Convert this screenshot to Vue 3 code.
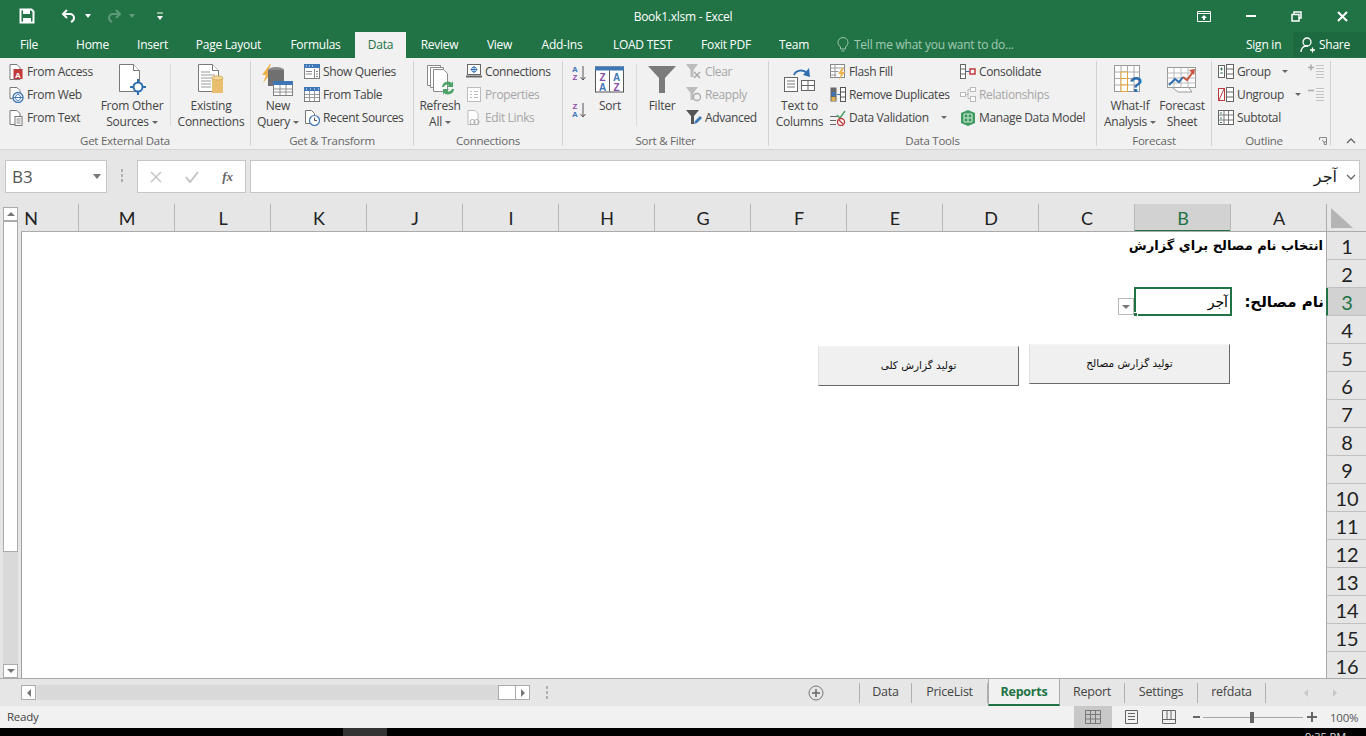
<script setup>
const tabs = [
  { t: 'File', w: 61 }, { t: 'Home', w: 63 }, { t: 'Insert', w: 57 }, { t: 'Page Layout', w: 95 },
  { t: 'Formulas', w: 79 }, { t: 'Data', w: 51, active: true }, { t: 'Review', w: 67 }, { t: 'View', w: 53 },
  { t: 'Add-Ins', w: 72 }, { t: 'LOAD TEST', w: 89 }, { t: 'Foxit PDF', w: 78 }, { t: 'Team', w: 58 }
]
const cols = ['N', 'M', 'L', 'K', 'J', 'I', 'H', 'G', 'F', 'E', 'D', 'C', 'B', 'A']
const rows = Array.from({ length: 16 }, (_, i) => i + 1)
const sheets = [
  { t: 'Data', w: 52 }, { t: 'PriceList', w: 76 }, { t: 'Reports', w: 72, active: true },
  { t: 'Report', w: 65 }, { t: 'Settings', w: 73 }, { t: 'refdata', w: 68 }
]
</script>

<template>
  <div class="app">
    <header class="title">
      <div class="qat">
        <svg class="q-save" width="16" height="16" viewBox="0 0 16 16"><path d="M1.500 1.500h11l2 2v11h-13z" fill="none" stroke="#fff" stroke-width="2"/><rect x="4" y="2" width="7" height="4" fill="#fff"/><rect x="4" y="10" width="8" height="4" fill="#fff"/></svg>
        <svg class="q-undo" width="16" height="14" viewBox="0 0 16 14"><path d="M6 1 2 5l4 4M2 5h7a4 4 0 0 1 4 4c0 2-1 3-3 4" fill="none" stroke="#fff" stroke-width="2"/></svg>
        <span class="caret q-c1"></span>
        <svg class="q-redo" width="16" height="14" viewBox="0 0 16 14"><path d="M10 1l4 4-4 4M14 5H7a4 4 0 0 0-4 4c0 2 1 3 3 4" fill="none" stroke="#5f9a7b" stroke-width="2"/></svg>
        <span class="caret dim q-c2"></span>
        <svg class="q-more" width="8" height="9" viewBox="0 0 8 9"><path d="M1 1h6" stroke="#fff"/><path d="M1 4h6L4 8z" fill="#fff"/></svg>
      </div>
      <div class="doc">Book1.xlsm - Excel</div>
      <div class="win">
        <svg width="14" height="11" viewBox="0 0 14 11"><path d="M.5.5h13v10H.5zM.5 2.500h13" fill="none" stroke="#fff"/><path d="M7 4l3 3H8v2H6V7H4z" fill="#fff"/></svg>
        <svg width="10" height="2" viewBox="0 0 10 2"><rect width="10" height="2" fill="#fff"/></svg>
        <svg width="11" height="11" viewBox="0 0 11 11"><path d="M3 3V1h7v6H8M1 3.500h7v6.500H1z" fill="none" stroke="#fff" stroke-width="1.500"/></svg>
        <svg width="11" height="11" viewBox="0 0 11 11"><path d="M1 1l9 9M10 1l-9 9" stroke="#fff" stroke-width="2"/></svg>
      </div>
    </header>

    <nav class="tabs">
      <div v-for="tab in tabs" :key="tab.t" class="tab" :class="{ active: tab.active }" :style="{ width: tab.w + 'px' }">{{ tab.t }}</div>
      <div class="tell">
        <svg width="12" height="15" viewBox="0 0 12 15"><path d="M3.500 10C2 8.500 1 7.500 1 5.500a5 5 0 0 1 10 0c0 2-1 3-2.500 4.500v2h-5zM4.500 14h3" fill="none" stroke="#9cc4ad"/></svg>
        <span>Tell me what you want to do...</span>
      </div>
      <div class="sign">Sign in</div>
      <div class="share">
        <svg width="16" height="16" viewBox="0 0 16 16"><circle cx="7" cy="5" r="4" fill="none" stroke="#fff" stroke-width="1.300"/><path d="M1 15c0-3 2-6 5-6h2M10 13h5M12.500 10.500v5" fill="none" stroke="#fff" stroke-width="1.300"/></svg>
        <span>Share</span>
      </div>
    </nav>

    <section class="ribbon">
      <!-- Get External Data -->
      <div class="group g1">
        <div class="body">
          <div class="small-col c-ext">
            <div class="si"><svg width="15" height="16" viewBox="0 0 15 16"><path d="M1.500.5h7l3 3v12h-10z" fill="#fff" stroke="#777"/><rect x="5" y="5" width="9" height="10" fill="#c0393b"/><text x="9.500" y="13.500" class="ic-t wh">A</text></svg>From Access</div>
            <div class="si"><svg width="15" height="16" viewBox="0 0 15 16"><path d="M1.500.5h7l3 3v8h-10z" fill="#fff" stroke="#777"/><circle cx="9.500" cy="10.500" r="5" fill="#fff" stroke="#3f76b5" stroke-width="1.300"/><path d="M4.500 10.500h10M7 10.500c0-4 5-4 5 0s-5 4-5 0" fill="none" stroke="#3f76b5"/></svg>From Web</div>
            <div class="si"><svg width="15" height="16" viewBox="0 0 15 16"><path d="M1.500.5h7l3 3v11h-10z" fill="#fff" stroke="#777"/><rect x="6.500" y="6.500" width="7" height="9" fill="#fff" stroke="#777"/><path d="M8 9h4M8 11h4M8 13h4" stroke="#888"/></svg>From Text</div>
          </div>
          <div class="large w-other">
            <svg width="30" height="32" viewBox="0 0 30 32"><path d="M2.500.5h14l6 6v21h-20z" fill="#fff" stroke="#7a7a7a"/><path d="M16.500.5v6h6" fill="#fff" stroke="#7a7a7a"/><circle cx="21" cy="23" r="4.500" fill="#fff" stroke="#2f6fb0" stroke-width="2"/><path d="M13 23h4M25 23h4M21 15v4M21 27v4" stroke="#2f6fb0" stroke-width="2"/></svg>
            <div class="lt">From Other<br>Sources<i class="mini"></i></div>
          </div>
          <div class="lsep s-a"></div>
          <div class="large w-exist">
            <svg width="30" height="32" viewBox="0 0 30 32"><path d="M2.500.5h14l6 6v21h-20z" fill="#fff" stroke="#7a7a7a"/><path d="M16.500.5v6h6" fill="#fff" stroke="#7a7a7a"/><path d="M5 8h9M5 11h14M5 14h14M5 17h10M5 20h10M5 23h10" stroke="#999"/><rect x="16" y="14" width="11" height="15" fill="#e9bf6f"/><ellipse cx="21.500" cy="14" rx="5.500" ry="2" fill="#f3d9a0" stroke="#d9a94f"/></svg>
            <div class="lt">Existing<br>Connections</div>
          </div>
        </div>
        <div class="label">Get External Data</div>
      </div>

      <!-- Get & Transform -->
      <div class="group g2">
        <div class="body">
          <div class="large w-44">
            <svg width="36" height="32" viewBox="0 0 36 32"><path d="M10 0 2 11h4l-3 8 10-12H8l3-7z" fill="#efb24c"/><ellipse cx="16" cy="6" rx="8" ry="3" fill="#8a8a8a"/><rect x="8" y="6" width="16" height="16" fill="#707070"/><rect x="13.500" y="17.500" width="19" height="14" fill="#fff" stroke="#7f7f7f"/><rect x="13" y="17" width="20" height="4" fill="#3f76b5"/><path d="M13.500 25h19M13.500 28h19M20 21v10M26 21v10" stroke="#8f8f8f"/></svg>
            <div class="lt">New<br>Query<i class="mini"></i></div>
          </div>
          <div class="small-col">
            <div class="si"><svg width="16" height="15" viewBox="0 0 16 15"><rect x=".5" y=".5" width="15" height="14" fill="#fff" stroke="#7f7f7f"/><rect width="16" height="4" fill="#3f76b5"/><path d="M2 2h1M5 2h1M8 2h1" stroke="#fff"/><path d="M10.500 5v9M12 7.500h2M12 10h2M12 12.500h2M2 7.500h6M2 10h6" stroke="#888"/></svg>Show Queries</div>
            <div class="si"><svg width="16" height="15" viewBox="0 0 16 15"><rect x=".5" y=".5" width="15" height="14" fill="#fff" stroke="#7f7f7f"/><rect width="16" height="4" fill="#3f76b5"/><path d="M2 2h1M6 2h1M10 2h1M14 2h1" stroke="#fff"/><path d="M1 7.500h14M1 10.500h14M5.500 4v10M10.500 4v10" stroke="#999"/></svg>From Table</div>
            <div class="si"><svg width="16" height="16" viewBox="0 0 16 16"><path d="M1.500.5h6l3 3v10h-9z" fill="#fff" stroke="#777"/><circle cx="10.500" cy="10.500" r="5" fill="#fff" stroke="#3f76b5" stroke-width="1.200"/><path d="M10.500 7.500v3h2.500" fill="none" stroke="#555"/></svg>Recent Sources</div>
          </div>
        </div>
        <div class="label">Get &amp; Transform</div>
      </div>

      <!-- Connections -->
      <div class="group g3">
        <div class="body">
          <div class="large w-44b">
            <svg width="32" height="32" viewBox="0 0 32 32"><path d="M3.500 1.500h13v20h-13z" fill="#fff" stroke="#8a8a8a"/><path d="M6.500 3.500h13v20h-13z" fill="#fff" stroke="#8a8a8a"/><path d="M9.500 5.500h10l4 4v18h-14z" fill="#fff" stroke="#8a8a8a"/><path d="M18 23a6 6 0 0 1 10-4l1-2v6h-6l2-2a3.500 3.500 0 0 0-5 2zM30 25a6 6 0 0 1-10 4l-1 2v-6h6l-2 2a3.500 3.500 0 0 0 5-2z" fill="#4da266"/></svg>
            <div class="lt">Refresh<br>All<i class="mini"></i></div>
          </div>
          <div class="small-col">
            <div class="si"><svg width="16" height="15" viewBox="0 0 16 15"><rect x="1.500" y=".5" width="13" height="10" fill="#fff" stroke="#666"/><path d="M0 12.500h16" stroke="#666" stroke-width="2"/><circle cx="8" cy="5.500" r="2.500" fill="#fff" stroke="#3f76b5"/><path d="M8 2v7M4.500 5.500h7" stroke="#3f76b5"/></svg>Connections</div>
            <div class="si dis"><svg width="16" height="15" viewBox="0 0 16 15"><rect x="1.500" y=".5" width="13" height="14" fill="#fff" stroke="#bbb"/><path d="M4 4.500h2M8 4.500h4M4 7.500h2M8 7.500h4M4 10.500h2M8 10.500h4" stroke="#bbb"/></svg>Properties</div>
            <div class="si dis"><svg width="15" height="16" viewBox="0 0 15 16"><path d="M1.500.5h7l3 3v11h-10z" fill="#fff" stroke="#bbb"/><circle cx="6" cy="12" r="2.500" fill="none" stroke="#aaa"/><circle cx="10" cy="12" r="2.500" fill="none" stroke="#aaa"/></svg>Edit Links</div>
          </div>
        </div>
        <div class="label">Connections</div>
      </div>

      <!-- Sort & Filter -->
      <div class="group g4">
        <div class="body">
          <div class="sort-col">
            <svg width="16" height="18" viewBox="0 0 16 18"><text x="4" y="8" class="ic-t blu">A</text><text x="4" y="16" class="ic-t pur">Z</text><path d="M12 2v14M9.500 13l2.500 3 2.500-3" fill="none" stroke="#555"/></svg>
            <svg width="16" height="18" viewBox="0 0 16 18"><text x="4" y="8" class="ic-t pur">Z</text><text x="4" y="16" class="ic-t blu">A</text><path d="M12 2v14M9.500 13l2.500 3 2.500-3" fill="none" stroke="#555"/></svg>
          </div>
          <div class="large w-sort">
            <svg width="30" height="27" viewBox="0 0 30 27"><rect x=".5" y=".5" width="28" height="25" fill="#fff" stroke="#555"/><rect width="29" height="4" fill="#3f76b5"/><path d="M14.500 4v21" stroke="#555"/><text x="7.500" y="14" class="ic-b pur">Z</text><text x="7.500" y="24" class="ic-b blu">A</text><text x="21.500" y="14" class="ic-b blu">A</text><text x="21.500" y="24" class="ic-b pur">Z</text></svg>
            <div class="lt">Sort</div>
          </div>
          <div class="lsep s-b"></div>
          <div class="large w-filter">
            <svg width="28" height="28" viewBox="0 0 28 28"><path d="M0 0h28L17 12v15h-6V12z" fill="#7b7b7b"/></svg>
            <div class="lt">Filter</div>
          </div>
          <div class="small-col">
            <div class="si dis"><svg width="16" height="15" viewBox="0 0 16 15"><path d="M0 0h12L7.500 6v7h-3V6z" fill="#bdbdbd"/><path d="M8 8l6 6M14 8l-6 6" stroke="#aaa" stroke-width="1.500"/></svg>Clear</div>
            <div class="si dis"><svg width="16" height="15" viewBox="0 0 16 15"><path d="M0 0h12L7.500 6v7h-3V6z" fill="#bdbdbd"/><circle cx="11" cy="10" r="3.500" fill="none" stroke="#aaa" stroke-width="1.300"/></svg>Reapply</div>
            <div class="si"><svg width="16" height="15" viewBox="0 0 16 15"><path d="M0 0h13L8 6v8H5V6z" fill="#555"/><path d="M8 14l1-3 5-5 2 2-5 5z" fill="#3f76b5"/></svg>Advanced</div>
          </div>
        </div>
        <div class="label">Sort &amp; Filter</div>
      </div>

      <!-- Data Tools -->
      <div class="group g5">
        <div class="body">
          <div class="large w-text">
            <svg width="32" height="26" viewBox="0 0 32 26"><rect x=".5" y="10.500" width="13" height="14" fill="#fff" stroke="#666"/><path d="M3 14h8M3 17h8M3 20h8" stroke="#777"/><rect x="17.500" y="13.500" width="13" height="10" fill="#fff" stroke="#666"/><path d="M24 13.500v10M17.500 18.500h13" stroke="#666"/><path d="M10 8c2-5 9-6 13-2" fill="none" stroke="#2f6fb0" stroke-width="2"/><path d="M25 1l1 9-7-2z" fill="#2f6fb0"/></svg>
            <div class="lt">Text to<br>Columns</div>
          </div>
          <div class="small-col c-dt">
            <div class="si"><svg width="16" height="16" viewBox="0 0 16 16"><rect x=".5" y=".5" width="14" height="13" fill="#fff" stroke="#888"/><path d="M.5 4h14M.5 7.500h8M.5 11h6M5 .5v13" stroke="#999"/><path d="M12 4 8 10h3l-2 6 6-8h-3l2-4z" fill="#efb24c"/></svg>Flash Fill</div>
            <div class="si"><svg width="16" height="15" viewBox="0 0 16 15"><rect x=".5" y=".5" width="6" height="14" fill="#666"/><rect x="1.500" y="5" width="4" height="4" fill="#3f76b5"/><rect x="1.500" y="10" width="4" height="4" fill="#e0b050"/><path d="M7 7.500h3" stroke="#2f6fb0"/><rect x="10.500" y=".5" width="5" height="14" fill="#fff" stroke="#555"/><path d="M10.500 5h5M10.500 10h5" stroke="#555"/></svg>Remove Duplicates</div>
            <div class="si"><svg width="16" height="16" viewBox="0 0 16 16"><path d="M0 6.500h9M0 10.500h6M0 14.500h6" stroke="#666"/><path d="M7 5l3 3 5-7" fill="none" stroke="#4da266" stroke-width="1.500"/><circle cx="11" cy="12" r="3.500" fill="#fff" stroke="#c0393b" stroke-width="1.300"/><path d="M8.500 9.500l5 5" stroke="#c0393b" stroke-width="1.300"/></svg>Data Validation<i class="mini wide"></i></div>
          </div>
          <div class="small-col">
            <div class="si"><svg width="16" height="15" viewBox="0 0 16 15"><rect x=".5" y=".5" width="5" height="14" fill="#fff" stroke="#666"/><path d="M.5 5h5M.5 10h5" stroke="#666"/><path d="M6 7.500h3" stroke="#2f6fb0"/><rect x="10" y="5" width="5" height="5" fill="#fff" stroke="#c0393b" stroke-width="1.500"/></svg>Consolidate</div>
            <div class="si dis"><svg width="16" height="15" viewBox="0 0 16 15"><rect x=".5" y="5.500" width="5" height="4" fill="#fff" stroke="#bbb"/><rect x="10.500" y=".5" width="5" height="4" fill="#fff" stroke="#bbb"/><rect x="10.500" y="9.500" width="5" height="5" fill="#fff" stroke="#bbb"/><path d="M5.500 7.500h3M8 2.500v9M8 2.500h2M8 11.500h2" stroke="#bbb"/></svg>Relationships</div>
            <div class="si"><svg width="16" height="16" viewBox="0 0 16 16"><path d="M8 0l7 3v10l-7 3-7-3V3z" fill="#3d9a5f"/><path d="M4 4h8v8H4zM8 4v8M4 8h8" fill="none" stroke="#cfe8d6"/></svg>Manage Data Model</div>
          </div>
        </div>
        <div class="label">Data Tools</div>
      </div>

      <!-- Forecast -->
      <div class="group g6">
        <div class="body">
          <div class="large w-what">
            <svg class="whatif" width="32" height="30" viewBox="0 0 32 30"><rect x=".5" y=".5" width="25" height="26" fill="#fff" stroke="#999"/><path d="M.5 7h25M.5 13.500h25M.5 20h25M7 .5v26M13.500 .5v26M20 .5v26" stroke="#aaa"/><rect x="7" y="7" width="6.500" height="6.500" fill="#fff" stroke="#e3a63f"/><rect x="7" y="13.500" width="6.500" height="6.500" fill="#fff" stroke="#e3a63f"/><rect x="7" y="20" width="6.500" height="6.500" fill="#fff" stroke="#e3a63f"/><text x="22" y="27" class="ic-q">?</text></svg>
            <div class="lt">What-If<br>Analysis<i class="mini"></i></div>
          </div>
          <div class="large w-fore">
            <svg width="30" height="26" viewBox="0 0 30 26"><rect x=".5" y=".5" width="28" height="20" fill="#fff" stroke="#999"/><path d="M.5 6h28M.5 11h28M.5 16h28M7 .5v20M14 .5v20M21 .5v20" stroke="#bbb"/><path d="M6 21l5 4h14l-3-4" fill="#fff" stroke="#999"/><path d="M2 18l6-6 4 3 4-5" fill="none" stroke="#2f6fb0" stroke-width="2"/><path d="M16 10l4 3 6-8" fill="none" stroke="#c8553d" stroke-width="2"/><path d="M22 3l6-1-1 6z" fill="#c8553d"/></svg>
            <div class="lt">Forecast<br>Sheet</div>
          </div>
        </div>
        <div class="label">Forecast</div>
      </div>

      <!-- Outline -->
      <div class="group g7">
        <div class="body">
          <div class="small-col c-out">
            <div class="si"><svg width="16" height="15" viewBox="0 0 16 15"><rect x=".5" y="1.500" width="6" height="12" fill="#fff" stroke="#666"/><path d="M2 5h3M2 9h3M3.500 3.500v3" stroke="#3b7d55"/><rect x="8.500" y=".5" width="7" height="14" fill="#fff" stroke="#666"/><path d="M8.500 5h7M8.500 10h7" stroke="#666"/></svg>Group<i class="mini far"></i></div>
            <div class="si"><svg width="16" height="15" viewBox="0 0 16 15"><rect x=".5" y="1.500" width="6" height="12" fill="#fff" stroke="#c0393b"/><path d="M1 13L6 2" stroke="#c0393b"/><rect x="8.500" y=".5" width="7" height="14" fill="#fff" stroke="#666"/><path d="M8.500 5h7M8.500 10h7" stroke="#666"/></svg>Ungroup<i class="mini far"></i></div>
            <div class="si"><svg width="16" height="15" viewBox="0 0 16 15"><rect x=".5" y=".5" width="15" height="14" fill="#fff" stroke="#666"/><path d="M6 .5v14M10.500 .5v14M.5 5h15M.5 10h15" stroke="#777"/><path d="M2 3h2M2 8h2M2 12.500h2" stroke="#3b7d55"/></svg>Subtotal</div>
          </div>
          <div class="out-col">
            <svg width="16" height="15" viewBox="0 0 16 15"><path d="M0 3.500h6M3 .5v6" stroke="#aaa" stroke-width="1.500"/><path d="M8 1.500h8M8 4.500h8M8 7.500h8M8 10.500h8M8 13.500h8" stroke="#c4c4c4"/></svg>
            <svg width="16" height="15" viewBox="0 0 16 15"><path d="M0 3.500h6" stroke="#aaa" stroke-width="1.500"/><path d="M8 1.500h8M8 4.500h8M8 7.500h8M8 10.500h8M8 13.500h8" stroke="#c4c4c4"/></svg>
          </div>
        </div>
        <div class="label l-out">Outline
          <svg class="launch" width="8" height="8" viewBox="0 0 8 8"><path d="M.5 3V.5H7.500V7.500H5M3 3l3 3M6 4v2H4" fill="none" stroke="#888"/></svg>
        </div>
      </div>
      <svg class="collapse" width="10" height="6" viewBox="0 0 10 6"><path d="M1 5l4-4 4 4" fill="none" stroke="#666" stroke-width="1.300"/></svg>
    </section>

    <section class="fbar">
      <div class="namebox"><span>B3</span><i class="fcaret"></i></div>
      <div class="dots"><i></i><i></i><i></i></div>
      <div class="fxbox">
        <svg width="12" height="12" viewBox="0 0 12 12"><path d="M1 1l10 10M11 1L1 11" stroke="#c4c4c4" stroke-width="1.500"/></svg>
        <svg width="14" height="12" viewBox="0 0 14 12"><path d="M1 6l4 5 8-10" fill="none" stroke="#c4c4c4" stroke-width="2"/></svg>
        <span class="fx">fx</span>
      </div>
      <div class="finput"><span dir="rtl">آجر</span><svg width="10" height="6" viewBox="0 0 10 6"><path d="M1 1l4 4 4-4" fill="none" stroke="#666" stroke-width="1.300"/></svg></div>
    </section>

    <section class="work">
      <aside class="vscroll">
        <div class="sbtn"><i class="tri up"></i></div>
        <div class="vtrack"><div class="vthumb"></div></div>
        <div class="sbtn"><i class="tri down"></i></div>
      </aside>
      <div class="sheet">
        <div class="hrow">
          <div class="colheads">
            <div v-for="c in cols" :key="c" class="colhead" :class="{ sel: c === 'B' }">{{ c }}</div>
          </div>
          <div class="corner"><svg width="22" height="20" viewBox="0 0 22 20"><path d="M0 0l22 20H0z" fill="#b4b4b4"/></svg></div>
        </div>
        <div class="rowsarea">
          <div v-for="r in rows" :key="r" class="row">
            <div class="cells">
              <template v-if="r === 1"><div class="a1" dir="rtl">انتخاب نام مصالح براي گزارش</div></template>
              <template v-if="r === 3">
                <div class="b3" dir="rtl">آجر<i class="handle"></i>
                  <div class="dd"><i class="tri down"></i></div>
                </div>
                <div class="a3" dir="rtl">نام مصالح:</div>
              </template>
            </div>
            <div class="rowhead" :class="{ sel: r === 3 }">{{ r }}</div>
          </div>
          <button class="xbtn xb1" dir="rtl">توليد گزارش مصالح</button>
          <button class="xbtn xb2" dir="rtl">توليد گزارش کلی</button>
        </div>
      </div>
    </section>

    <section class="strip">
      <div class="sbtn h b-l"><i class="tri left"></i></div>
      <div class="htrack"></div>
      <div class="hthumb"></div>
      <div class="sbtn h"><i class="tri right"></i></div>
      <div class="dots hd"><i></i><i></i><i></i></div>
      <svg class="plus" width="16" height="16" viewBox="0 0 16 16"><circle cx="8" cy="8" r="7" fill="none" stroke="#777"/><path d="M4 8h8M8 4v8" stroke="#666" stroke-width="1.500"/></svg>
      <div class="sheets">
        <div v-for="s in sheets" :key="s.t" class="stab" :class="{ active: s.active }" :style="{ width: s.w + 'px' }">{{ s.t }}</div>
      </div>
      <i class="tri left pale nav1"></i>
      <i class="tri right pale nav2"></i>
    </section>

    <footer class="status">
      <span class="ready">Ready</span>
      <div class="views">
        <div class="view on"><svg width="16" height="14" viewBox="0 0 16 14"><path d="M.5.500h15v13H.5zM.5 4.500h15M.5 9h15M5.500.500v13M10.500.500v13" fill="none" stroke="#777"/></svg></div>
        <div class="view"><svg width="13" height="14" viewBox="0 0 13 14"><path d="M.5.500h12v13H.5zM3 3.500h7M3 6.500h7M3 9.500h7" fill="none" stroke="#666"/></svg></div>
        <div class="view"><svg width="14" height="14" viewBox="0 0 14 14"><path d="M.5.500h13v13H.5zM.5 9.500h13M5 .5v9M9 .5v9" fill="none" stroke="#666"/></svg></div>
      </div>
      <div class="zoomer">
        <i class="zm"></i>
        <div class="zline"><i class="zthumb"></i></div>
        <svg width="10" height="10" viewBox="0 0 10 10"><path d="M0 5h10M5 0v10" stroke="#666" stroke-width="2"/></svg>
      </div>
      <span class="pct">100%</span>
    </footer>

    <div class="taskbar"><div class="tb-app"></div><span class="clock">9:35 PM</span></div>
  </div>
</template>

<style scoped>
.app { width: 1366px; height: 736px; overflow: hidden; display: flex; flex-direction: column; font: 12px "Open Sans", "Noto Sans", sans-serif; color: #444; background: #fff; letter-spacing: -0.25px; }
i { display: block; font-style: normal; }
svg { display: block; flex: none; }

.title { height: 32px; flex: none; background: #217346; display: flex; align-items: center; position: relative; color: #fff; }
.qat { display: flex; align-items: center; padding-left: 19px; }
.q-undo { margin-left: 26px; }
.q-c1 { margin-left: 8px; }
.q-redo { margin-left: 15px; }
.q-c2 { margin-left: 7px; }
.q-more { margin-left: 21px; }
.caret { width: 0; height: 0; border: 3px solid transparent; border-top: 4px solid #fff; border-bottom: 0; }
.caret.dim { border-top-color: #5f9a7b; }
.doc { position: absolute; left: 0; right: 0; text-align: center; font-size: 12px; }
.win { margin-left: auto; display: flex; align-items: center; gap: 0; padding-right: 18px; }
.win svg { margin-left: 35px; }

.tabs { height: 26px; flex: none; background: #217346; display: flex; color: #fff; }
.tab { text-align: center; line-height: 25px; height: 26px; box-sizing: border-box; }
.tab:first-child { padding-right: 3px; }
.tab.active { background: #f1f1f1; color: #217346; }
.tell { display: flex; align-items: center; gap: 5px; margin-left: 14px; color: #a3c9b3; width: 409px; height: 25px; }
.sign { line-height: 25px; width: 47px; }
.share { width: 73px; height: 25px; background: #1e6a40; display: flex; align-items: center; gap: 3px; padding-left: 7px; box-sizing: border-box; }

.ribbon { height: 92px; flex: none; background: #f1f1f1; border-bottom: 1px solid #d4d4d4; box-sizing: border-box; display: flex; position: relative; }
.group { position: relative; display: flex; flex-direction: column; box-sizing: border-box; border-right: 1px solid #d2d2d2; margin-top: 3px; margin-bottom: 3px; height: 85px; }
.g1 { width: 251px; }
.g2 { width: 163px; }
.g3 { width: 149px; }
.g4 { width: 206px; }
.g5 { width: 328px; }
.g6 { width: 115px; }
.g7 { width: 119px; }
.body { height: 71px; display: flex; flex: none; }
.label { text-align: center; font-size: 11.5px; color: #666; line-height: 14px; margin-top: 2px; position: relative; }
.l-out { padding-right: 14px; }
.launch { position: absolute; right: 3px; top: 3px; }
.small-col { display: flex; flex-direction: column; margin-top: -1px; }
.si { height: 23px; display: flex; align-items: center; gap: 3px; white-space: nowrap; letter-spacing: -0.37px; }
.si > svg { width: 16px; }
.si.dis { color: #a6a6a6; }
.c-ext { width: 94px; margin-left: 8px; }
.c-dt { width: 130px; margin-left: 1px; }
.c-out { width: 90px; margin-left: 6px; }
.large { display: flex; flex-direction: column; align-items: center; text-align: center; line-height: 16px; }
.large > svg { height: 32px; margin-top: 3px; margin-bottom: 2px; }
.whatif { overflow: visible; }
.lt { white-space: nowrap; }
.w-other { width: 60px; }
.w-exist { width: 68px; }
.w-44 { width: 44px; margin-left: 5px; margin-right: 4px; }
.w-44b { width: 44px; margin-left: 4px; margin-right: 4px; }
.w-sort { width: 40px; }
.w-filter { width: 40px; margin-right: 4px; }
.w-text { width: 59px; margin-left: 1px; }
.w-what { width: 56px; margin-left: 5px; }
.w-fore { width: 48px; }
.lsep { width: 1px; height: 62px; background: #dcdcdc; margin-top: 3px; flex: none; }
.s-a { margin-left: 8px; margin-right: 6px; }
.s-b { margin-left: 6px; margin-right: 5px; }
.sort-col { width: 19px; margin-left: 8px; display: flex; flex-direction: column; gap: 19px; padding-top: 3px; box-sizing: border-box; }
.out-col { display: flex; flex-direction: column; gap: 8px; padding-top: 3px; }
.mini { display: inline-block; width: 0; height: 0; margin-left: 3px; border: 3px solid transparent; border-top: 3px solid #666; border-bottom: 0; vertical-align: middle; }
.mini.wide { margin-left: 9px; }
.mini.far { margin-left: 8px; }
.collapse { position: absolute; left: 1346px; top: 80px; }
.ic-t { font: 700 8px "Liberation Sans", sans-serif; text-anchor: middle; letter-spacing: 0; }
.ic-b { font: 700 10px "Liberation Sans", sans-serif; text-anchor: middle; letter-spacing: 0; }
.ic-q { font: 700 22px "Liberation Sans", sans-serif; text-anchor: middle; fill: #2f6fb0; letter-spacing: 0; }
.wh { fill: #fff; }
.blu { fill: #3f76b5; }
.pur { fill: #8a4fa8; }

.fbar { height: 54px; flex: none; background: #e6e6e6; display: flex; align-items: flex-start; padding-top: 10px; box-sizing: border-box; }
.namebox, .fxbox, .finput { height: 33px; background: #fff; border: 1px solid #c6c6c6; box-sizing: border-box; display: flex; align-items: center; }
.namebox { width: 102px; margin-left: 5px; padding: 0 5px 0 6px; justify-content: space-between; font-size: 17px; color: #555; letter-spacing: 0; }
.fcaret { width: 0; height: 0; border: 4px solid transparent; border-top: 5px solid #777; border-bottom: 0; }
.dots { display: flex; flex-direction: column; gap: 2px; width: 2px; margin: 9px 14px 0 14px; }
.dots i { width: 2px; height: 3px; background: #b0b0b0; }
.fxbox { width: 109px; justify-content: space-between; padding: 0 12px 0 12px; }
.fx { font: italic 700 13px "Liberation Serif", serif; color: #666; letter-spacing: 0; }
.finput { width: 1110px; margin-left: 4px; justify-content: flex-end; gap: 9px; padding-right: 3px; font: 16px "DejaVu Sans", sans-serif; letter-spacing: 0; color: #222; }

.work { height: 474px; flex: none; display: flex; background: #e6e6e6; }
.vscroll { width: 21px; flex: none; padding: 3px 3px 0 3px; box-sizing: border-box; display: flex; flex-direction: column; }
.sbtn { width: 15px; height: 14px; background: #fff; border: 1px solid #ababab; box-sizing: border-box; display: flex; align-items: center; justify-content: center; flex: none; }
.vtrack { flex: 1; background: #d9d9d9; }
.vthumb { height: 331px; background: #fff; border: 1px solid #ababab; box-sizing: border-box; }
.tri { width: 0; height: 0; border: 4px solid transparent; }
.tri.up { border-bottom: 4px solid #777; border-top: 0; }
.tri.down { border-top: 4px solid #777; border-bottom: 0; }
.tri.left { border-right: 4px solid #777; border-left: 0; }
.tri.right { border-left: 4px solid #777; border-right: 0; }
.tri.pale.left { border-right-color: #c8c8c8; }
.tri.pale.right { border-left-color: #c8c8c8; }
.sheet { width: 1345px; display: flex; flex-direction: column; overflow: hidden; }
.hrow { height: 28px; flex: none; display: flex; }
.colheads { width: 1305px; display: flex; justify-content: flex-end; overflow: hidden; border-bottom: 1px solid #ababab; box-sizing: border-box; }
.colhead { width: 96px; flex: none; text-align: center; font: 18px/28px Lato, sans-serif; color: #222; border-left: 1px solid #b8b8b8; padding-left: 1px; box-sizing: border-box; letter-spacing: 0; }
.colhead.sel { background: #d2d2d2; border-bottom: 2px solid #217346; color: #217346; height: 28px; }
.corner { width: 40px; padding: 4px 0 0 4px; box-sizing: border-box; border-bottom: 1px solid #ababab; border-left: 1px solid #ababab; }
.rowsarea { flex: 1; position: relative; overflow: hidden; }
.row { height: 28px; display: flex; }
.cells { width: 1305px; height: 28px; flex: none; background: #fff; border-left: 1px solid #9f9f9f; box-sizing: border-box; position: relative; display: flex; justify-content: flex-end; }
.rowhead { width: 40px; box-sizing: border-box; text-align: center; font: 20px/28px Lato, sans-serif; color: #222; border-left: 1px solid #ababab; border-bottom: 1px solid #c0c0c0; padding-left: 1px; letter-spacing: 0; }
.rowhead.sel { background: #d2d2d2; color: #217346; border-left: 2px solid #217346; padding-left: 0; }
.a1 { position: absolute; right: 3px; top: 4px; font: 700 13px/20px "DejaVu Sans", sans-serif; color: #000; white-space: nowrap; letter-spacing: 0; }
.a3 { width: 94px; font: 700 15px/28px "DejaVu Sans", sans-serif; color: #000; white-space: nowrap; padding-right: 2px; box-sizing: border-box; text-align: right; letter-spacing: 0; }
.b3 { width: 98px; height: 29px; margin-top: -1px; box-sizing: border-box; border: 2px solid #217346; position: relative; background: #fff; font: 14px/26px "DejaVu Sans", sans-serif; color: #000; padding-right: 2px; z-index: 2; letter-spacing: 0; }
.handle { position: absolute; left: -3px; bottom: -3px; background: #217346; border: 1px solid #fff; box-sizing: content-box; width: 3px; height: 3px; }
.dd { position: absolute; left: -18px; top: 9px; width: 16px; height: 17px; background: #fff; border: 1px solid #b9b9b9; box-sizing: border-box; display: flex; align-items: center; justify-content: center; }
.xbtn { position: absolute; width: 201px; height: 40px; background: #f0f0f0; border: 1px solid; border-color: #f4f4f4 #696969 #696969 #e0e0e0; font: 10.5px "DejaVu Sans", sans-serif; color: #111; padding: 0 0 2px; letter-spacing: 0; }
.xb1 { left: 1008px; top: 112px; }
.xb2 { left: 797px; top: 114px; }

.strip { height: 28px; flex: none; background: #e6e6e6; border-top: 1px solid #ababab; box-sizing: border-box; display: flex; align-items: center; position: relative; }
.sbtn.h { width: 15px; height: 15px; }
.b-l { margin-left: 21px; }
.htrack { width: 461px; height: 15px; background: #d9d9d9; margin-left: 1px; }
.hthumb { width: 17px; height: 15px; background: #fff; border: 1px solid #ababab; border-right: 0; box-sizing: border-box; }
.hd { margin: 0 15px 0 16px; }
.plus { margin-left: 245px; }
.sheets { display: flex; margin-left: 35px; height: 20px; border-left: 1px solid #b0b0b0; align-items: stretch; }
.stab { text-align: center; line-height: 18px; border-right: 1px solid #b0b0b0; box-sizing: border-box; color: #444; font-size: 12.5px; }
.stab.active { background: #f1f1f1; color: #217346; font-weight: 700; height: 27px; margin-top: -4px; line-height: 25px; border-bottom: 2px solid #217346; border-left: 1px solid #ababab; border-right: 1px solid #ababab; }
.nav1 { position: absolute; left: 1304px; top: 10px; }
.nav2 { position: absolute; left: 1333px; top: 10px; }

.status { height: 22px; flex: none; background: #f1f1f1; display: flex; align-items: center; padding-left: 7px; box-sizing: border-box; }
.ready { font-size: 11.5px; color: #444; margin-bottom: 1px; }
.views { display: flex; margin-left: auto; height: 22px; margin-right: 5px; }
.view { width: 38px; display: flex; align-items: center; justify-content: center; }
.view.on { background: #c8c8c8; }
.zoomer { display: flex; align-items: center; width: 124px; flex: none; }
.zm { width: 7px; height: 2px; background: #666; flex: none; }
.zline { width: 100px; height: 1px; background: #a5a5a5; margin: 0 4px 0 3px; position: relative; flex: none; }
.zthumb { position: absolute; left: 47px; top: -5px; width: 4px; height: 11px; background: #666; }
.pct { width: 36px; flex: none; margin-left: 13px; font-size: 11.5px; color: #555; box-sizing: border-box; }

.taskbar { height: 8px; flex: none; background: #000; position: relative; overflow: hidden; }
.tb-app { position: absolute; left: 343px; top: 0; width: 44px; height: 8px; background: #333; }
.clock { position: absolute; left: 1305px; top: 2px; color: #ddd; font-size: 11px; line-height: 14px; letter-spacing: 0; }
</style>
